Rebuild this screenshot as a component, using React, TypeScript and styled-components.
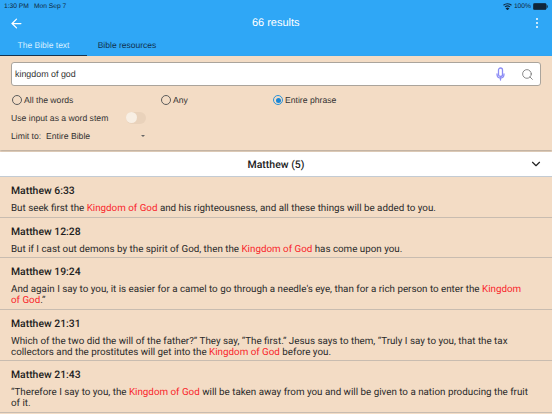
import React from 'react';
import styled, {createGlobalStyle} from 'styled-components';
import {ArrowLeft, ChevronDown, Search} from 'lucide-react';

const GlobalStyle = createGlobalStyle`
    html, body {
        margin: 0;
        padding: 0;
        background: #f3dcc5;
    }
    body {
        font-family: Roboto, "Liberation Sans", sans-serif;
        color: #222;
        text-rendering: geometricPrecision;
    }
`;

const Page = styled.div`
    width: 552px;
    height: 414px;
    overflow: hidden;
    display: flex;
    flex-direction: column;
    background: #f3dcc5;
`;

const Blue = styled.header`
    background: #2fa7f6;
    height: 56px;
    flex: none;
    display: flex;
    flex-direction: column;
    font-family: "Liberation Sans", sans-serif;
`;

const StatusBar = styled.div`
    height: 12px;
    padding: 0 4px;
    display: flex;
    align-items: center;
    justify-content: space-between;
    font-size: 6.7px;
    color: #10263a;
`;

const StatusGroup = styled.div<{$gap: number}>`
    display: flex;
    align-items: center;
    gap: ${p => p.$gap}px;
`;

const TopBar = styled.div`
    height: 22px;
    padding: 0 7.5px 0 9px;
    display: flex;
    align-items: center;
    justify-content: space-between;
    color: #fff;
`;

const Title = styled.div`
    font-size: 11px;
    margin-left: -2px;
`;

const Dots = styled.div`
    width: 15px;
    display: flex;
    flex-direction: column;
    align-items: center;
    gap: 1.6px;
`;

const Dot = styled.span`
    width: 2.2px;
    height: 2.2px;
    border-radius: 50%;
    background: #fff;
`;

const TabRow = styled.nav`
    height: 22px;
    display: flex;
`;

const Tab = styled.div<{$active?: boolean; $width: number}>`
    width: ${p => p.$width}px;
    box-sizing: border-box;
    padding-top: 1px;
    display: flex;
    align-items: center;
    justify-content: center;
    font-size: 8.5px;
    color: ${p => (p.$active ? '#d9f0ff' : '#10314f')};
    border-bottom: 1px solid ${p => (p.$active ? '#12324f' : 'transparent')};
`;

const Form = styled.section`
    height: 94px;
    flex: none;
    box-sizing: border-box;
    padding: 6px 11px 0;
    box-shadow: 0 1px 2px rgba(90, 90, 90, 0.45);
    position: relative;
    font-family: "Liberation Sans", sans-serif;
    font-size: 8.65px;
`;

const SearchBox = styled.div`
    height: 24px;
    box-sizing: border-box;
    background: #fff;
    border: 1px solid #aaa49c;
    border-radius: 3px;
    display: flex;
    align-items: center;
    padding: 0 6px 0 3px;
`;

const SearchText = styled.span`
    flex: 1;
    font-size: 8.9px;
    color: #333;
`;

const IconSlot = styled.span<{$width: number}>`
    width: ${p => p.$width}px;
    display: flex;
    justify-content: center;
    align-items: center;
    color: #707070;
`;

const RadioRow = styled.div`
    margin: 7px 0 0 1px;
    height: 14px;
    display: grid;
    grid-template-columns: 149px 112px auto;
    align-items: center;
`;

const RadioItem = styled.label`
    display: flex;
    align-items: center;
    gap: 2px;
    color: #333;
`;

const RadioCircle = styled.span<{$on?: boolean}>`
    width: 8px;
    height: 8px;
    border-radius: 50%;
    box-sizing: content-box;
    border: 1px solid ${p => (p.$on ? '#2a93d8' : '#5c5c5c')};
    display: flex;
    align-items: center;
    justify-content: center;
    &::after {
        content: '';
        width: 5px;
        height: 5px;
        border-radius: 50%;
        background: ${p => (p.$on ? '#1a86d6' : 'transparent')};
    }
`;

const OptionRow = styled.div`
    margin-top: 3px;
    height: 15px;
    display: flex;
    align-items: center;
    color: #333;
`;

const StemLabel = styled.span`
    width: 115px;
`;

const SwitchTrack = styled.span`
    width: 20px;
    height: 12px;
    border-radius: 6px;
    background: #e9d2bb;
    display: flex;
    align-items: center;
`;

const SwitchKnob = styled.span`
    width: 11px;
    height: 11px;
    border-radius: 50%;
    background: #f8efe4;
`;

const LimitLabel = styled.span`
    width: 35px;
`;

const SelectValue = styled.span`
    width: 95px;
`;

const Caret = styled.span`
    width: 0;
    height: 0;
    border-left: 2.5px solid transparent;
    border-right: 2.5px solid transparent;
    border-top: 2.5px solid #666;
`;

const SectionHeader = styled.div`
    margin-top: 2px;
    height: 25px;
    flex: none;
    background: #fff;
    border-bottom: 1px solid #c3cbd3;
    box-sizing: border-box;
    display: flex;
    align-items: center;
    justify-content: center;
    position: relative;
    font-size: 10.5px;
    font-weight: 500;
    color: #222;
`;

const Chevron = styled.span`
    position: absolute;
    right: 9px;
    top: 5px;
    display: flex;
    color: #222;
`;

const Verse = styled.article<{$height: number}>`
    height: ${p => p.$height}px;
    box-sizing: border-box;
    padding: 7px 20.5px 0 11px;
    border-bottom: 1px solid #c8bcb0;
`;

const Reference = styled.h3`
    margin: 0 0 6px;
    font-size: 10.4px;
    line-height: 13px;
    font-weight: 500;
    color: #1d1d1d;
`;

const VerseText = styled.p`
    margin: 0;
    font-size: 9.8px;
    line-height: 11.4px;
    color: #2a2a2a;
`;

const Mark = styled.span`
    color: #f9252b;
`;

const K = <Mark>Kingdom of God</Mark>;

const verses = [
    {ref: 'Matthew 6:33', height: 41, text: <>But seek first the {K} and his righteousness, and all these things will be added to you.</>},
    {ref: 'Matthew 12:28', height: 40, text: <>But if I cast out demons by the spirit of God, then the {K} has come upon you.</>},
    {ref: 'Matthew 19:24', height: 52, text: <>And again I say to you, it is easier for a camel to go through a needle's eye, than for a rich person to enter the {K}.”</>},
    {ref: 'Matthew 21:31', height: 51, text: <>Which of the two did the will of the father?” They say, “The first.” Jesus says to them, “Truly I say to you, that the tax collectors and the prostitutes will get into the {K} before you.</>},
    {ref: 'Matthew 21:43', height: 52, text: <>“Therefore I say to you, the {K} will be taken away from you and will be given to a nation producing the fruit of it.</>},
];

const Wifi = () => (
    <svg width="9" height="7" viewBox="0 0 18 14" fill="none" stroke="#10263a" strokeWidth="2.2">
        <path d="M1 4.500c4.500-4 11.500-4 16 0" />
        <path d="M4 7.800c3-2.600 7-2.600 10 0" />
        <path d="M6.800 10.800c1.300-1 3.100-1 4.400 0L9 13.200z" fill="#10263a" />
    </svg>
);

const Battery = () => (
    <svg width="15" height="7" viewBox="0 0 30 14">
        <rect x="0.500" y="0.500" width="26" height="13" rx="3" fill="#10263a" stroke="#10263a" />
        <rect x="27.500" y="4.500" width="2" height="5" rx="1" fill="#10263a" />
    </svg>
);

const Mic = () => (
    <svg width="9" height="14" viewBox="0 0 18 28" fill="none" stroke="#8c8cf5" strokeWidth="2.6" strokeLinecap="round">
        <rect x="5" y="2" width="8" height="17" rx="4" />
        <path d="M2 14c0 6 3 8 7 8s7-2 7-8" />
        <path d="M9 22v4" />
    </svg>
);

export default function App() {
    return (
        <Page>
            <GlobalStyle />
            <Blue>
                <StatusBar>
                    <StatusGroup $gap={5}>
                        <span>1:30 PM</span>
                        <span>Mon Sep 7</span>
                    </StatusGroup>
                    <StatusGroup $gap={2}>
                        <Wifi />
                        <span>100%</span>
                        <Battery />
                    </StatusGroup>
                </StatusBar>
                <TopBar>
                    <ArrowLeft size={15} strokeWidth={2} />
                    <Title>66 results</Title>
                    <Dots>
                        <Dot />
                        <Dot />
                        <Dot />
                    </Dots>
                </TopBar>
                <TabRow>
                    <Tab $active $width={87}>The Bible text</Tab>
                    <Tab $width={80}>Bible resources</Tab>
                </TabRow>
            </Blue>
            <Form>
                <SearchBox>
                    <SearchText>kingdom of god</SearchText>
                    <IconSlot $width={40}>
                        <Mic />
                    </IconSlot>
                    <IconSlot $width={14}>
                        <Search size={13} strokeWidth={1.5} />
                    </IconSlot>
                </SearchBox>
                <RadioRow>
                    <RadioItem>
                        <RadioCircle />
                        All the words
                    </RadioItem>
                    <RadioItem>
                        <RadioCircle />
                        Any
                    </RadioItem>
                    <RadioItem>
                        <RadioCircle $on />
                        Entire phrase
                    </RadioItem>
                </RadioRow>
                <OptionRow>
                    <StemLabel>Use input as a word stem</StemLabel>
                    <SwitchTrack>
                        <SwitchKnob />
                    </SwitchTrack>
                </OptionRow>
                <OptionRow>
                    <LimitLabel>Limit to:</LimitLabel>
                    <SelectValue>Entire Bible</SelectValue>
                    <Caret />
                </OptionRow>
            </Form>
            <SectionHeader>
                Matthew (5)
                <Chevron>
                    <ChevronDown size={14} strokeWidth={2} />
                </Chevron>
            </SectionHeader>
            {verses.map(v => (
                <Verse key={v.ref} $height={v.height}>
                    <Reference>{v.ref}</Reference>
                    <VerseText>{v.text}</VerseText>
                </Verse>
            ))}
        </Page>
    );
}
